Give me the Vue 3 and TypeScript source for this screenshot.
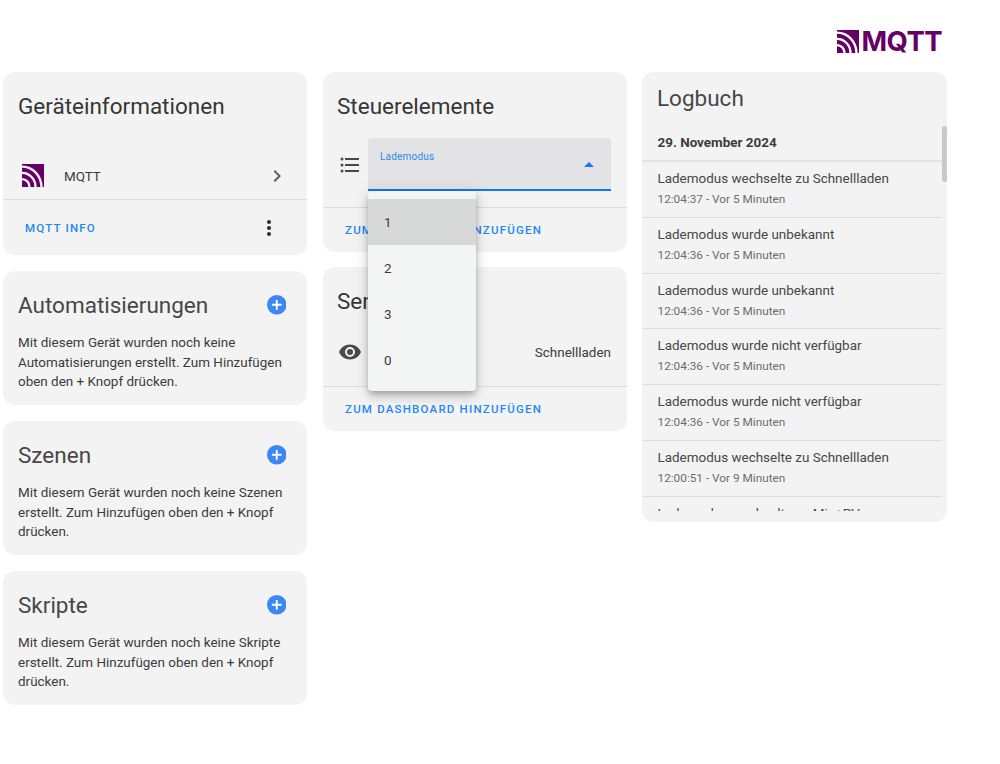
<script setup lang="ts">
const logEntries = [
  { text: 'Lademodus wechselte zu Schnellladen', time: '12:04:37 - Vor 5 Minuten' },
  { text: 'Lademodus wurde unbekannt', time: '12:04:36 - Vor 5 Minuten' },
  { text: 'Lademodus wurde unbekannt', time: '12:04:36 - Vor 5 Minuten' },
  { text: 'Lademodus wurde nicht verfügbar', time: '12:04:36 - Vor 5 Minuten' },
  { text: 'Lademodus wurde nicht verfügbar', time: '12:04:36 - Vor 5 Minuten' },
  { text: 'Lademodus wechselte zu Schnellladen', time: '12:00:51 - Vor 9 Minuten' },
  { text: 'Lademodus wechselte zu Min+PV', time: '12:00:50 - Vor 9 Minuten' },
]
const sections = [
  { title: 'Automatisierungen', body: 'Mit diesem Gerät wurden noch keine Automatisierungen erstellt. Zum Hinzufügen oben den + Knopf drücken.' },
  { title: 'Szenen', body: 'Mit diesem Gerät wurden noch keine Szenen erstellt. Zum Hinzufügen oben den + Knopf drücken.' },
  { title: 'Skripte', body: 'Mit diesem Gerät wurden noch keine Skripte erstellt. Zum Hinzufügen oben den + Knopf drücken.' },
]
const options = ['1', '2', '3', '0']
const mqttIcon = 'M0 0H24V24H22.500A22.500 22.500 0 0 0 0 1.500ZM0 4A20 20 0 0 1 20 24H16A16 16 0 0 0 0 8ZM0 10.500A13.500 13.500 0 0 1 13.500 24H9.500A9.500 9.500 0 0 0 0 14.500ZM0 17A7 7 0 0 1 7 24H0Z'
</script>

<template>
  <div class="page">
    <header class="top">
      <div class="logo">
        <svg class="logo-icon" viewBox="0 0 24 24" preserveAspectRatio="none">
          <path fill="#660066" :d="mqttIcon"/>
        </svg>
        <span class="logo-text">MQTT</span>
      </div>
    </header>
    <main class="columns">
      <div class="col">
        <section class="card info">
          <h2 class="title info-title">Geräteinformationen</h2>
          <div class="device-row">
            <svg class="device-icon" viewBox="0 0 24 24" preserveAspectRatio="none">
              <path fill="#660066" :d="mqttIcon"/>
            </svg>
            <span class="device-name">MQTT</span>
            <svg class="chevron" viewBox="0 0 24 24"><path fill="#5f5f5f" d="M8.590 16.580 13.170 12 8.590 7.410 10 6l6 6-6 6z"/></svg>
          </div>
          <div class="actions info-actions">
            <span class="link">MQTT INFO</span>
            <svg class="dots" viewBox="0 0 24 24"><path fill="#2b2b2b" d="M12 16a2 2 0 1 1 0 4 2 2 0 0 1 0-4zm0-6a2 2 0 1 1 0 4 2 2 0 0 1 0-4zm0-6a2 2 0 1 1 0 4 2 2 0 0 1 0-4z"/></svg>
          </div>
        </section>
        <section v-for="s in sections" :key="s.title" class="card add-card">
          <div class="add-head">
            <h2 class="title add-title">{{ s.title }}</h2>
            <svg class="plus" viewBox="0 0 20 20">
              <circle cx="10" cy="10" r="10" fill="#3b87f5"/>
              <path fill="#fff" d="M9 5h2v4h4v2h-4v4H9v-4H5V9h4z"/>
            </svg>
          </div>
          <p class="body">{{ s.body }}</p>
        </section>
      </div>

      <div class="col col-2">
        <section class="card controls">
          <h2 class="title">Steuerelemente</h2>
          <div class="control-row">
            <svg class="list-icon" viewBox="0 0 24 24"><path fill="#4a4a4a" d="M7 5h14v2H7zm0 6h14v2H7zm0 6h14v2H7zM4 4.500A1.500 1.500 0 1 1 4 7.500 1.500 1.500 0 0 1 4 4.500zm0 6a1.500 1.500 0 1 1 0 3 1.500 1.500 0 0 1 0-3zm0 6a1.500 1.500 0 1 1 0 3 1.500 1.500 0 0 1 0-3z"/></svg>
            <div class="select">
              <span class="select-label">Lademodus</span>
              <span class="select-arrow"></span>
              <ul class="menu">
                <li v-for="(o, i) in options" :key="o" class="menu-item" :class="{ active: i === 0 }">{{ o }}</li>
              </ul>
            </div>
          </div>
          <div class="actions"><span class="link">ZUM DASHBOARD HINZUFÜGEN</span></div>
        </section>
        <section class="card sensors">
          <h2 class="title">Sensoren</h2>
          <div class="sensor-row">
            <svg class="eye" viewBox="0 0 24 24"><path fill="#4a4a4a" d="M12 4.500C7 4.500 2.730 7.610 1 12c1.730 4.390 6 7.500 11 7.500s9.270-3.110 11-7.500c-1.730-4.390-6-7.500-11-7.500zM12 17a5 5 0 1 1 0-10 5 5 0 0 1 0 10zm0-8a3 3 0 1 0 0 6 3 3 0 0 0 0-6z"/></svg>
            <span class="sensor-value">Schnellladen</span>
          </div>
          <div class="actions"><span class="link">ZUM DASHBOARD HINZUFÜGEN</span></div>
        </section>
      </div>

      <div class="col col-3">
        <section class="card logbook">
          <h2 class="title log-title">Logbuch</h2>
          <div class="log-scroll">
            <div class="log-date">29. November 2024</div>
            <div v-for="(e, i) in logEntries" :key="i" class="log-entry">
              <div class="log-text">{{ e.text }}</div>
              <div class="log-time">{{ e.time }}</div>
            </div>
            <span class="thumb"></span>
          </div>
        </section>
      </div>
    </main>
  </div>
</template>

<style>
html, body { background: #fff; }
</style>

<style scoped>
.page {
  width: 1000px;
  height: 764px;
  overflow: hidden;
  background: #fff;
  font-family: Roboto, "Liberation Sans", sans-serif;
  color: #3c3c3c;
  box-sizing: border-box;
  padding-left: 3px;
}
.top {
  height: 72px;
  display: flex;
  justify-content: flex-end;
  box-sizing: border-box;
  padding: 29px 58px 0 0;
}
.logo { display: flex; align-items: center; height: 25px; gap: 3px; }
.logo-icon { width: 22px; height: 23px; }
.logo-text {
  font-family: Inter, Roboto, sans-serif;
  font-weight: 700;
  font-size: 27.500px;
  line-height: 25px;
  letter-spacing: -0.6px;
  color: #660066;
}
.columns { display: flex; gap: 16px; align-items: flex-start; }
.col { width: 304px; display: flex; flex-direction: column; gap: 16px; }
.col-2 { gap: 15px; }
.col-3 { width: 305px; margin-left: -1px; }
.card { background: #f3f3f3; border-radius: 12px; }
.title { margin: 0; font-weight: 400; font-size: 22.500px; line-height: 32px; color: #363636; }
.add-title { color: #474747; }
.info { height: 183px; display: flex; flex-direction: column; }
.info-title { padding: 18px 15px 0; }
.device-row { display: flex; align-items: center; height: 47px; margin-top: 30px; padding: 0 15px 0 19px; }
.device-icon { width: 22px; height: 23px; }
.device-name { margin-left: 20px; padding-top: 1px; font-size: 13.440px; flex: 1; color: #3c3c3c; }
.chevron { width: 24px; height: 24px; margin-right: 3px; }
.actions {
  border-top: 1px solid #dcdcdc;
  padding: 0 22px;
  height: 44px;
  display: flex;
  align-items: center;
}
.info-actions { height: 56px; box-sizing: border-box; justify-content: space-between; padding-right: 26px; }
.link { font-size: 11.500px; font-weight: 500; letter-spacing: 1.200px; color: #1e88f5; }
.dots { width: 24px; height: 24px; }
.add-card { padding: 18px 15px 14px; height: 134px; box-sizing: border-box; }
.add-head { display: flex; align-items: center; justify-content: space-between; height: 32px; padding-right: 6px; }
.plus { width: 19.500px; height: 19.500px; }
.body { margin: 12px 0 0; font-size: 13.440px; line-height: 19.500px; color: #3c3c3c; }
.controls { height: 180px; display: flex; flex-direction: column; padding-top: 18px; box-sizing: border-box; }
.controls .title, .sensors .title { padding: 0 14px; }
.control-row { display: flex; height: 85px; padding: 1px 16px 0 15px; align-items: flex-start; box-sizing: border-box; }
.list-icon { width: 24px; height: 24px; margin: 30px 6px 0 0; flex: none; }
.select {
  position: relative;
  margin-top: 15px;
  flex: 1;
  height: 53px;
  background: #e3e3e5;
  border-radius: 4px 4px 0 0;
  border-bottom: 2px solid #1479e8;
  box-sizing: border-box;
}
.select-label { position: absolute; left: 12px; top: 13px; font-size: 10px; line-height: 12px; color: #2c8af0; letter-spacing: .2px; }
.select-arrow {
  position: absolute; right: 17px; top: 24px; width: 0; height: 0;
  border-left: 5px solid transparent; border-right: 5px solid transparent; border-bottom: 5px solid #1479e8;
}
.menu {
  position: absolute;
  left: 0; top: 53px;
  width: 108px;
  margin: 0;
  padding: 8px 0;
  list-style: none;
  background: #f3f4f4;
  border-radius: 4px;
  box-shadow: 0 3px 5px -1px rgba(0,0,0,.2), 0 6px 10px rgba(0,0,0,.14), 0 1px 18px rgba(0,0,0,.12);
  z-index: 3;
}
.menu-item { height: 46px; line-height: 48px; padding-left: 16px; font-size: 13.440px; color: #3c3c3c; }
.menu-item.active { background: #d7d9d8; }
.sensors { height: 164px; padding-top: 18px; box-sizing: border-box; display: flex; flex-direction: column; }
.sensor-row { display: flex; align-items: center; justify-content: space-between; height: 52px; margin-top: 9px; padding: 0 16px 0 15px; }
.eye { width: 24px; height: 24px; }
.sensor-value { font-size: 13.440px; color: #3c3c3c; }
.sensors .actions { flex: 1; height: auto; margin-top: 8px; }
.logbook { height: 450px; overflow: hidden; position: relative; }
.log-title { padding: 10px 15px 0; color: #474747; }
.log-scroll { margin-top: 10px; height: 387px; overflow: hidden; position: relative; }
.log-date { height: 40px; line-height: 42px; padding-left: 15.500px; font-size: 13.440px; font-weight: 700; color: #3c3c3c; box-sizing: border-box; border-bottom: 2px solid #e4e4e4; margin-right: 5px; margin-top: -2px; }
.log-entry { height: 55.800px; margin-right: 5px; border-bottom: 1px solid #dcdcdc; box-sizing: border-box; padding: 7px 15.500px 0; }
.log-text { font-size: 13.440px; line-height: 20px; color: #474747; }
.log-time { font-size: 11.800px; line-height: 19px; color: #6d6d6d; margin-top: 1px; }
.thumb { position: absolute; right: 0; top: 2px; width: 5px; height: 56px; background: #c9c9c9; border-radius: 3px; }
</style>
